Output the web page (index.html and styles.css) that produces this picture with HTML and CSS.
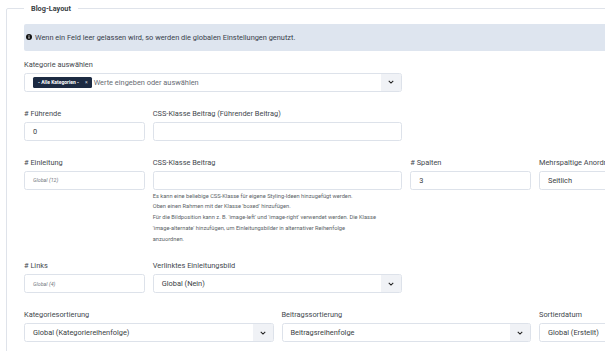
FILE: index.html
```html
<!DOCTYPE html>
<html lang="de">
<head>
<meta charset="utf-8">
<title>Blog-Layout</title>
<link rel="stylesheet" href="styles.css">
</head>
<body>
<fieldset class="panel">
  <legend class="legend">Blog-Layout</legend>
  <div class="alert">
    <svg class="alert-icon" viewBox="0 0 10 10" width="6" height="6"><circle cx="5" cy="5" r="5" fill="#111"/><rect x="4.2" y="4.2" width="1.6" height="3.6" fill="#fff"/><circle cx="5" cy="2.8" r="0.9" fill="#fff"/></svg>
    <span>Wenn ein Feld leer gelassen wird, so werden die globalen Einstellungen genutzt.</span>
  </div>

  <div class="row">
    <div class="field span3">
      <div class="label">Kategorie auswählen</div>
      <div class="control select">
        <span class="chip">- Alle Kategorien -<span class="chip-x">×</span></span>
        <span class="placeholder">Werte eingeben oder auswählen</span>
        <span class="caret"><svg viewBox="0 0 8 5" width="6" height="4"><polyline points="1,1 4,4 7,1" fill="none" stroke="#222" stroke-width="1.4"/></svg></span>
      </div>
    </div>
  </div>

  <div class="row">
    <div class="field">
      <div class="label"># Führende</div>
      <div class="control">0</div>
    </div>
    <div class="field span2">
      <div class="label">CSS-Klasse Beitrag (Führender Beitrag)</div>
      <div class="control"></div>
    </div>
  </div>

  <div class="row">
    <div class="field">
      <div class="label"># Einleitung</div>
      <div class="control"><span class="hint">Global (12)</span></div>
    </div>
    <div class="field span2">
      <div class="label">CSS-Klasse Beitrag</div>
      <div class="control"></div>
      <div class="help">Es kann eine beliebige CSS-Klasse für eigene Styling-Ideen hinzugefügt werden.<br>Oben einen Rahmen mit der Klasse 'boxed' hinzufügen.<br>Für die Bildposition kann z. B. 'image-left' und 'image-right' verwendet werden. Die Klasse<br>'image-alternate' hinzufügen, um Einleitungsbilder in alternativer Reihenfolge<br>anzuordnen.</div>
    </div>
    <div class="field">
      <div class="label"># Spalten</div>
      <div class="control">3</div>
    </div>
    <div class="field">
      <div class="label">Mehrspaltige Anordnung</div>
      <div class="control select">Seitlich<span class="caret"><svg viewBox="0 0 8 5" width="6" height="4"><polyline points="1,1 4,4 7,1" fill="none" stroke="#222" stroke-width="1.4"/></svg></span></div>
    </div>
  </div>

  <div class="row">
    <div class="field">
      <div class="label"># Links</div>
      <div class="control"><span class="hint">Global (4)</span></div>
    </div>
    <div class="field span2">
      <div class="label">Verlinktes Einleitungsbild</div>
      <div class="control select">Global (Nein)<span class="caret"><svg viewBox="0 0 8 5" width="6" height="4"><polyline points="1,1 4,4 7,1" fill="none" stroke="#222" stroke-width="1.4"/></svg></span></div>
    </div>
  </div>

  <div class="row">
    <div class="field span2">
      <div class="label">Kategoriesortierung</div>
      <div class="control select">Global (Kategoriereihenfolge)<span class="caret"><svg viewBox="0 0 8 5" width="6" height="4"><polyline points="1,1 4,4 7,1" fill="none" stroke="#222" stroke-width="1.4"/></svg></span></div>
    </div>
    <div class="field span2">
      <div class="label">Beitragssortierung</div>
      <div class="control select">Beitragsreihenfolge<span class="caret"><svg viewBox="0 0 8 5" width="6" height="4"><polyline points="1,1 4,4 7,1" fill="none" stroke="#222" stroke-width="1.4"/></svg></span></div>
    </div>
    <div class="field">
      <div class="label">Sortierdatum</div>
      <div class="control select">Global (Erstellt)<span class="caret"><svg viewBox="0 0 8 5" width="6" height="4"><polyline points="1,1 4,4 7,1" fill="none" stroke="#222" stroke-width="1.4"/></svg></span></div>
    </div>
  </div>
</fieldset>
</body>
</html>
```

FILE: styles.css
```css
html, body {
  margin: 0;
  overflow: hidden;
  background: #fff;
}
body {
  font-family: Roboto, "Liberation Sans", sans-serif;
  color: #3f444a;
  width: 700px;
  height: 351px;
}
.panel {
  margin: 3px 0 0 6px;
  padding: 9.5px 17px 20px 17px;
  border: 1px solid #dfe3ea;
  border-radius: 2px;
  width: 636px;
  min-height: 360px;
  box-sizing: content-box;
}
.legend {
  padding: 0 7px;
  font-size: 7.3px;
  font-weight: 700;
  line-height: 11px;
  color: #3a3f45;
}
.alert {
  display: flex;
  align-items: center;
  gap: 3px;
  height: 27px;
  box-sizing: border-box;
  padding: 0 2px;
  background: #dee5ef;
  border-radius: 2px;
  font-size: 7.4px;
  color: #39414c;
  margin-bottom: 8px;
}
.alert-icon {
  flex: none;
}
.row {
  display: grid;
  grid-template-columns: repeat(5, 120.75px);
  column-gap: 8px;
  align-items: start;
  margin-bottom: 16px;
}
.span2 { grid-column: span 2; }
.span3 { grid-column: span 3; }
.label {
  font-size: 7.4px;
  line-height: 11px;
  margin-bottom: 3px;
  color: #43484e;
  white-space: nowrap;
}
.control {
  position: relative;
  display: flex;
  align-items: center;
  height: 19px;
  box-sizing: border-box;
  border: 1px solid #dde2ea;
  border-radius: 2.5px;
  padding: 0 8px;
  font-size: 7.4px;
  color: #3a3e44;
  white-space: nowrap;
  overflow: hidden;
}
.select {
  padding-right: 24px;
}
.caret {
  margin-left: auto;
  margin-right: -24px;
  width: 20px;
  align-self: stretch;
  display: flex;
  align-items: center;
  justify-content: center;
  background: #f0f2f6;
}
.chip {
  display: inline-flex;
  align-items: center;
  height: 11px;
  padding: 0 4px 0 5px;
  background: #1c2a42;
  color: #fff;
  font-size: 5px;
  font-weight: 700;
  border-radius: 1.5px;
  margin-right: 2px;
}
.chip-x {
  margin-left: 6px;
  font-weight: 400;
  opacity: 0.8;
}
.placeholder {
  color: #676c73;
}
.hint {
  font-size: 5.3px;
  font-style: italic;
  color: #747980;
}
.help {
  margin-top: 1px;
  font-size: 5.7px;
  line-height: 10.8px;
  color: #5a5f66;
  white-space: nowrap;
}
```
